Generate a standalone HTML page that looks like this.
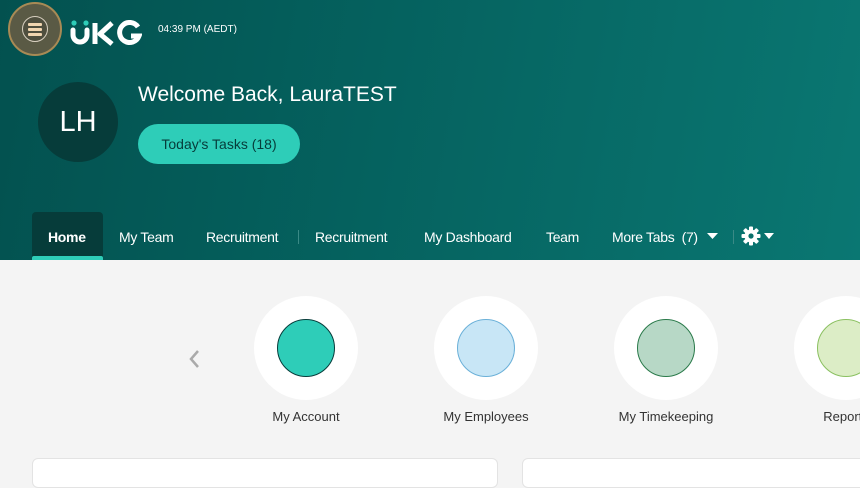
<!DOCTYPE html>
<html><head><style>
*{margin:0;padding:0;box-sizing:border-box}
body{width:860px;height:480px;overflow:hidden;background:#f4f4f4;font-family:"Liberation Sans",sans-serif;position:relative}
.hdr{position:absolute;left:0;top:0;width:860px;height:260px;background:linear-gradient(100deg,#03514f 0%,#05625f 45%,#0a7772 100%)}
.menu{position:absolute;left:8px;top:2px;width:54px;height:54px;border-radius:50%;background:#5a5a45;border:2px solid #a88a55}
.menu .in{position:absolute;left:12px;top:12px;width:26px;height:26px;border-radius:50%;border:1.5px solid #d8d0c0;background:#4f4f3e}
.menu .in i{position:absolute;left:5px;width:14px;height:3px;background:#f1d6b0;border-radius:1px}
.abs{position:absolute;color:#fff}
.av{position:absolute;left:38px;top:82px;width:80px;height:80px;border-radius:50%;background:#063c3a;color:#fff;font-size:29px;line-height:80px;text-align:center}
.btn{position:absolute;left:138px;top:124px;width:162px;height:40px;border-radius:20px;background:#2ecdb8;color:#063c3a;font-size:14px;line-height:40px;text-align:center}
.nav{position:absolute;top:229px;font-size:14px;color:#fff;letter-spacing:-0.3px}
.home{position:absolute;left:32px;top:212px;width:71px;height:48px;background:#063c3a;border-radius:4px 4px 0 0}
.home i{position:absolute;left:0;bottom:0;width:71px;height:4px;background:#2ecdb8;border-radius:2px 2px 0 0}
.c{position:absolute;top:296px;width:104px;height:104px;border-radius:50%;background:#fff}
.c i{position:absolute;left:23px;top:23px;width:58px;height:58px;border-radius:50%}
.lbl{position:absolute;top:409px;font-size:13px;color:#333;width:140px;text-align:center}
.card{position:absolute;top:458px;height:30px;background:#fff;border-radius:6px;border:1px solid #e3e3e3}
</style></head><body>
<div class="hdr"></div>
<div class="menu"><div class="in"><i style="top:6px"></i><i style="top:11px"></i><i style="top:16px"></i></div></div>
<svg class="abs" style="left:70px;top:20px" width="72" height="26" viewBox="0 0 72 26">
<circle cx="4" cy="3" r="2.6" fill="#2ecdb8"/><circle cx="16" cy="3" r="2.6" fill="#2ecdb8"/>
<path d="M3 10v5a7 7 0 0 0 14 0v-5" stroke="#fff" stroke-width="5" fill="none" stroke-linecap="round"/>
<path d="M25 3v21M42 3L30 14l12 10" stroke="#fff" stroke-width="5" fill="none" stroke-linejoin="round"/>
<path d="M68 7a10 10 0 1 0 1 9h-8" stroke="#fff" stroke-width="5" fill="none"/>
</svg>
<div class="abs" style="left:158px;top:24px;font-size:10px">04:39 PM (AEDT)</div>
<div class="av">LH</div>
<div class="abs" style="left:138px;top:83px;font-size:21px">Welcome Back, LauraTEST</div>
<div class="btn">Today's Tasks (18)</div>
<div class="home"><i></i></div>
<div class="nav" style="left:48px;font-weight:bold">Home</div>
<div class="nav" style="left:119px">My Team</div>
<div class="nav" style="left:206px">Recruitment</div>
<div class="abs" style="left:298px;top:230px;width:1px;height:14px;background:#3a8a86"></div>
<div class="nav" style="left:315px">Recruitment</div>
<div class="nav" style="left:424px">My Dashboard</div>
<div class="nav" style="left:546px">Team</div>
<div class="nav" style="left:612px">More Tabs&nbsp; (7)</div>
<svg class="abs" style="left:707px;top:233px" width="11" height="7"><path d="M0 0h11L5.5 6z" fill="#fff"/></svg>
<div class="abs" style="left:733px;top:230px;width:1px;height:14px;background:#3a8a86"></div>
<svg class="abs" style="left:741px;top:226px" width="20" height="20" viewBox="0 0 20 20">
<g fill="#fff"><circle cx="10" cy="10" r="6.5"/>
<rect x="8" y="0.5" width="4" height="19" rx="1"/><rect x="8" y="0.5" width="4" height="19" rx="1" transform="rotate(45 10 10)"/>
<rect x="8" y="0.5" width="4" height="19" rx="1" transform="rotate(90 10 10)"/><rect x="8" y="0.5" width="4" height="19" rx="1" transform="rotate(135 10 10)"/></g>
<circle cx="10" cy="10" r="2.6" fill="#0a6f6a"/></svg>
<svg class="abs" style="left:764px;top:233px" width="10" height="6"><path d="M0 0h10L5 6z" fill="#fff"/></svg>
<svg class="abs" style="left:188px;top:350px" width="12" height="18"><path d="M10 1L3 9l7 8" stroke="#aaa" stroke-width="2.5" fill="none"/></svg>
<div class="c" style="left:254px"><i style="background:#2ecdb8;border:1px solid #063c3a"></i></div>
<div class="c" style="left:434px"><i style="background:#c8e6f6;border:1px solid #6ab0d8"></i></div>
<div class="c" style="left:614px"><i style="background:#b7d8c6;border:1px solid #2a7a4a"></i></div>
<div class="c" style="left:794px"><i style="background:#dcedc6;border:1px solid #8ac060"></i></div>
<div class="lbl" style="left:236px">My Account</div>
<div class="lbl" style="left:416px">My Employees</div>
<div class="lbl" style="left:596px">My Timekeeping</div>
<div class="lbl" style="left:776px">Reports</div>
<div class="card" style="left:32px;width:466px"></div>
<div class="card" style="left:522px;width:350px"></div>
</body></html>
